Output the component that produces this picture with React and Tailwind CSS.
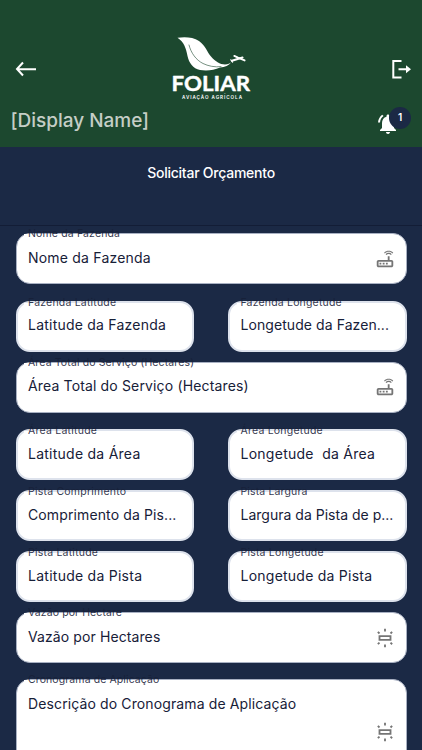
import React from "react";
import { MdNotificationsActive, MdOutlineFluorescent, MdOutlineRouter } from "react-icons/md";

const rows = [
  {
    className: "mt-4",
    fields: [
      {
        label: "Nome da Fazenda",
        labelClass: "tracking-[0.15px]",
        hint: "Nome da Fazenda",
        hintClass: "tracking-[0.2px]",
        icon: "router",
      },
    ],
  },
  {
    className: "mt-[16.5px]",
    fields: [
      {
        label: "Fazenda Latitude",
        labelClass: "tracking-[0.2px]",
        hint: "Latitude da Fazenda",
        hintClass: "tracking-[0.22px]",
      },
      {
        label: "Fazenda Longetude",
        labelClass: "tracking-[0.18px]",
        hint: "Longetude da Fazen...",
        hintClass: "tracking-[0.07px]",
      },
    ],
  },
  {
    className: "mt-2.5",
    fields: [
      {
        label: "Área Total do Serviço (Hectares)",
        labelClass: "tracking-[0.13px]",
        hint: "Área Total do Serviço (Hectares)",
        hintClass: "tracking-[0.15px]",
        icon: "router",
      },
    ],
  },
  {
    className: "mt-[16.5px]",
    fields: [
      {
        label: "Área Latitude",
        labelClass: "tracking-[0.24px]",
        hint: "Latitude da Área",
        hintClass: "tracking-[0.25px]",
      },
      {
        label: "Área Longetude",
        labelClass: "tracking-[0.22px]",
        hint: "Longetude  da Área",
        hintClass: "tracking-[0.26px]",
      },
    ],
  },
  {
    className: "mt-2.5",
    fields: [
      {
        label: "Pista Comprimento",
        labelClass: "tracking-[0.22px]",
        hint: "Comprimento da Pis...",
        hintClass: "tracking-[0.12px]",
      },
      {
        label: "Pista Largura",
        labelClass: "tracking-[0.14px]",
        hint: "Largura da Pista de p...",
        hintClass: "tracking-[0.01px]",
      },
    ],
  },
  {
    className: "mt-2.5",
    fields: [
      {
        label: "Pista Latitude",
        labelClass: "tracking-[0.22px]",
        hint: "Latitude da Pista",
        hintClass: "tracking-[0.26px]",
      },
      {
        label: "Pista Longetude",
        labelClass: "tracking-[0.2px]",
        hint: "Longetude da Pista",
        hintClass: "tracking-[0.24px]",
      },
    ],
  },
  {
    className: "mt-2.5",
    fields: [
      {
        label: "Vazão por Hectare",
        labelClass: "tracking-[0.1px]",
        hint: "Vazão por Hectares",
        hintClass: "tracking-[0.1px]",
        icon: "light",
      },
    ],
  },
  {
    className: "mt-4",
    fields: [
      {
        label: "Cronograma de Aplicação",
        labelClass: "tracking-[0.1px]",
        hint: "Descrição do Cronograma de Aplicação",
        hintClass: "tracking-[0.12px]",
        icon: "light",
        tall: true,
      },
    ],
  },
];

function Logo() {
  return (
    <svg viewBox="0 0 90 72" className="-ml-2 h-[72px] w-[90px]" fill="white">
      {/* leaf */}
      <path d="M12.5 5.7 C20 4.6 28 5 34 9 C41 14 42 20 46 24.5 C50 29 55 32.5 60 32.5 C63 32.5 65 31.5 66.5 30 C64 33.5 60 35.2 55 35.6 C49 38.5 41 39 35 38 C28 36.5 24 31 22.5 24 C21 16 19 10 12.5 5.7Z" />
      <path
        d="M24 13 C26 21 31 28 38 31.5 C43 34 50 35.5 56 34.6"
        fill="none"
        stroke="#1c482f"
        strokeWidth="0.6"
        strokeLinecap="round"
      />
      {/* plane */}
      <g fill="none" stroke="white" strokeLinecap="round" strokeLinejoin="round">
        <path d="M67 28.8 L77.5 25.6" strokeWidth="2.1" />
        <path d="M69.3 23.9 L73 25.6 L79.6 28.4" strokeWidth="1.9" />
        <path d="M65.8 27.8 L67.6 30.2" strokeWidth="1.1" />
      </g>
      <text
        x="6.5"
        y="59"
        fontFamily="Lato, sans-serif"
        fontSize="20.5"
        fontWeight="700"
        textLength="78.5"
        lengthAdjust="spacingAndGlyphs"
        stroke="white"
        strokeWidth="0.4"
        strokeLinejoin="round"
      >
        FOLIAR
      </text>
      <text x="17" y="67.3" fontFamily="Inter, sans-serif" fontSize="4.6" fontWeight="600" textLength="60">
        AVIAÇÃO AGRÍCOLA
      </text>
    </svg>
  );
}

function Field({ label, labelClass, hint, hintClass, icon, tall, half }) {
  return (
    <div
      className={`relative flex justify-between rounded-[14px] bg-white ${
        half ? "w-[178.5px] border-2 border-[#dde2ec] px-[10.5px]" : "w-full border border-[#a8b0c2] px-[11.5px]"
      } ${tall ? "h-[106px] items-stretch" : "h-[51px] items-center"}`}
    >
      <span
        className={`absolute -top-2 -ml-1 whitespace-nowrap bg-linear-to-b from-transparent from-50% to-white to-50% px-1 text-[10.5px] leading-4 text-[#172038]/90 ${labelClass}`}
      >
        {label}
      </span>
      <span
        className={`whitespace-pre text-sm leading-5 text-[#172038] ${hintClass} ${tall ? "pt-3.5" : "-mt-0.5"}`}
      >
        {hint}
      </span>
      {icon === "router" && <MdOutlineRouter className="-mr-0.5 h-[22px] w-[22px] text-[#757575]" />}
      {icon === "light" && (
        <MdOutlineFluorescent className="-mr-0.5 h-[22px] w-[22px] self-center text-[#757575]" />
      )}
    </div>
  );
}

export default function App() {
  return (
    <div className="h-[750px] w-full overflow-hidden bg-[#1b2945] font-[Inter,sans-serif]">
      <header className="flex h-[147px] flex-col bg-[#1c482f] pt-8">
        <div className="flex h-[72px] items-center justify-between pl-[15px] pr-[11px]">
          <svg viewBox="0 0 22 18" className="h-[18px] w-[22px]" fill="none" stroke="white" strokeWidth="2">
            <path d="M8 3.5 L2 10 L8 16.5 M2 10.2 H21" />
          </svg>
          <Logo />
          <svg viewBox="0 0 20 22" className="h-[22px] w-5" fill="none" stroke="white" strokeWidth="2">
            <path d="M10.5 4 H2.3 V20.5 H10.5 M7.5 12.3 H16" />
            <path d="M15 8.3 L20 12.3 L15 16.3Z" fill="white" stroke="none" />
          </svg>
        </div>
        <div className="flex items-center justify-between pl-[10.5px] pr-[11px]">
          <h1 className="pt-px text-[19px] font-medium leading-8 tracking-[-0.02px] text-[#c5cec6]">[Display Name]</h1>
          <div className="relative h-8 w-[35px]">
            <MdNotificationsActive className="absolute top-[7px] left-0 h-6 w-6 text-white" />
            <span className="absolute top-0.5 right-0 flex h-[22px] w-[22px] items-center justify-center rounded-full bg-[#1b2945] text-[10px] font-semibold text-white">
              1
            </span>
          </div>
        </div>
      </header>

      <div className="flex h-[79px] justify-center border-b border-[#131d36] pt-4">
        <h2 className="text-sm font-medium leading-5 tracking-[-0.24px] text-white">Solicitar Orçamento</h2>
      </div>

      <form className="-mt-[9px] px-[15.5px]">
        {rows.map((row, i) => (
          <div key={i} className={`flex justify-between ${row.className}`}>
            {row.fields.map((field) => (
              <Field key={field.label} {...field} half={row.fields.length === 2} />
            ))}
          </div>
        ))}
      </form>
    </div>
  );
}
